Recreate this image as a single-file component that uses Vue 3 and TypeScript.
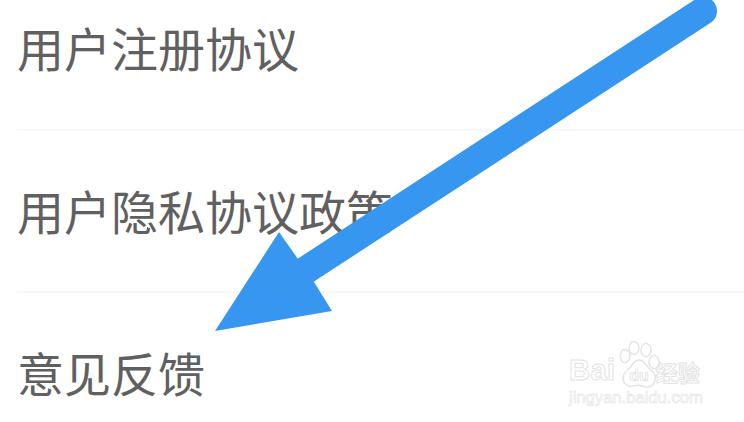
<script setup lang="ts">
const rows: string[] = ['用户注册协议', '用户隐私协议政策', '意见反馈']
</script>

<template>
  <div class="page">
    <ul class="list">
      <li v-for="row in rows" :key="row" class="row">{{ row }}</li>
    </ul>
    <svg class="arrow" width="744" height="422" viewBox="0 0 744 422" aria-hidden="true">
      <line x1="306" y1="270" x2="703" y2="11" stroke="#3797f0" stroke-width="28" stroke-linecap="round" />
      <polygon points="215,331 279,232 298,259 314,282 332,311" fill="#3797f0" />
    </svg>
    <div class="mark">
      <div class="mark-top">
        <span class="bai">Bai</span>
        <svg class="paw" width="42" height="48" viewBox="0 0 42 48" aria-hidden="true">
          <g fill="#fff" stroke="#e4e4e4" stroke-width="1.5">
            <ellipse cx="6" cy="15" rx="5" ry="6.5" />
            <ellipse cx="15" cy="7" rx="5" ry="6.5" />
            <ellipse cx="27" cy="9" rx="5" ry="6.5" />
            <ellipse cx="35" cy="21" rx="5" ry="6.5" />
            <path d="M20 19C26 19 27 26 33 30C39 36 36 46 28 46C24 46 22 44 20 44C18 44 14 46 10 45C3 43 2 34 8 30C13 26 14 19 20 19Z" />
          </g>
          <text x="20" y="40" class="du">du</text>
        </svg>
        <span class="jy">经验</span>
      </div>
      <div class="mark-url">jingyan.baidu.com</div>
    </div>
  </div>
</template>

<style>
html, body { margin: 0; background: #fff; }
</style>

<style scoped>
.page {
  position: relative;
  width: 744px;
  height: 422px;
  overflow: hidden;
  background: #fff;
  font-family: "Noto Sans CJK SC", "Noto Sans", sans-serif;
}
.list {
  list-style: none;
  margin: -32px 0 0;
  padding: 0 0 0 17px;
}
.row {
  height: 160.5px;
  line-height: 158px;
  font-size: 47px;
  color: #606060;
  border-bottom: 2px solid #f8f8f8;
  white-space: nowrap;
}
.row:last-child { border-bottom: none; }
.arrow {
  position: absolute;
  left: 0;
  top: 0;
}
.mark {
  position: absolute;
  left: 569px;
  top: 341px;
  width: 138px;
  font-family: "Liberation Sans", sans-serif;
  color: #fff;
  -webkit-text-stroke: 1px #e3e3e3;
}
.mark-top {
  display: flex;
  align-items: flex-end;
  height: 48px;
}
.bai {
  font-size: 29px;
  font-weight: 700;
  line-height: 30px;
  margin-bottom: 4px;
  letter-spacing: 0.5px;
}
.paw {
  flex: none;
  margin-left: 3px;
}
.du {
  font-size: 16px;
  font-weight: 700;
  text-anchor: middle;
  fill: #fff;
  stroke: #dcdcdc;
  stroke-width: 0.7;
}
.jy {
  font-family: "Noto Sans CJK SC", sans-serif;
  font-size: 22px;
  font-weight: 700;
  line-height: 28px;
  margin: 0 0 4px -5px;
  white-space: nowrap;
}
.mark-url {
  font-size: 16.6px;
  line-height: 18px;
  white-space: nowrap;
  -webkit-text-stroke: 0.7px #e6e6e6;
}
</style>
